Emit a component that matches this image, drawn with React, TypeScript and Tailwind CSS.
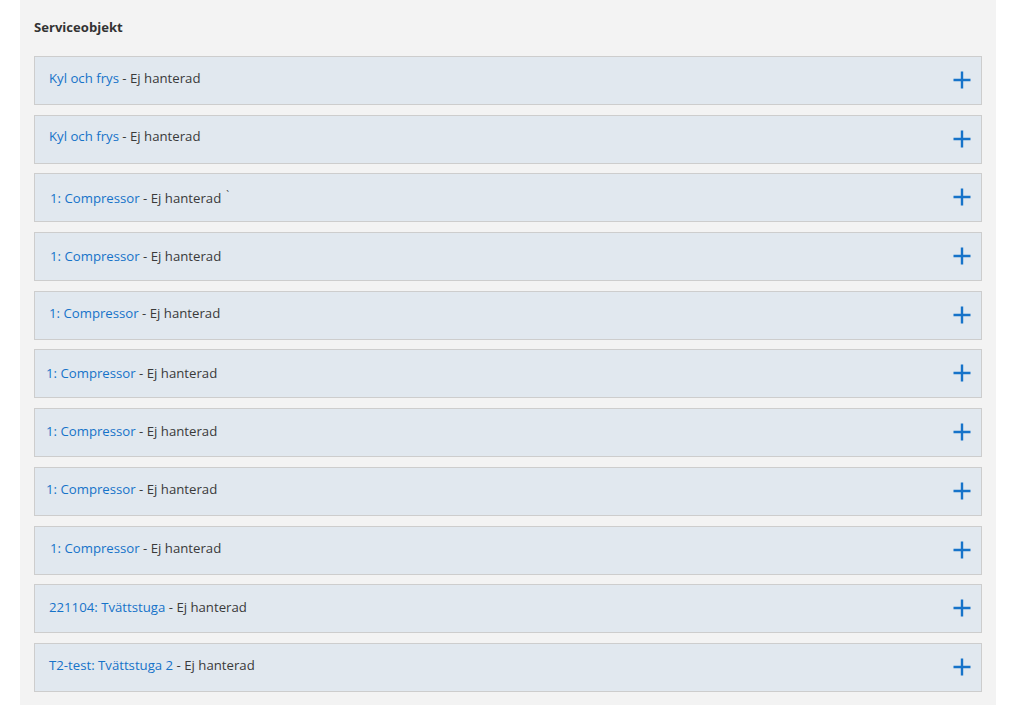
import React from 'react';

type Item = { name: string; pad: string; shift: string; extra?: string };

const items: Item[] = [
    { name: 'Kyl och frys', pad: 'pl-[14px]', shift: '-mt-[4px]' },
    { name: 'Kyl och frys', pad: 'pl-[14px]', shift: '-mt-[4px]' },
    { name: '1: Compressor', pad: 'pl-[15px]', shift: 'mt-[2px]', extra: '`' },
    { name: '1: Compressor', pad: 'pl-[15px]', shift: 'mt-[1px]' },
    { name: '1: Compressor', pad: 'pl-[14px]', shift: '-mt-[3px]' },
    { name: '1: Compressor', pad: 'pl-[11px]', shift: '-mt-[1px]' },
    { name: '1: Compressor', pad: 'pl-[11px]', shift: '-mt-[2px]' },
    { name: '1: Compressor', pad: 'pl-[11px]', shift: '-mt-[2px]' },
    { name: '1: Compressor', pad: 'pl-[15px]', shift: '-mt-[2px]' },
    { name: '221104: Tvättstuga', pad: 'pl-[14px]', shift: '-mt-[2px]' },
    { name: 'T2-test: Tvättstuga 2', pad: 'pl-[14px]', shift: '-mt-[2px]' },
];

function PlusIcon() {
    return (
        <svg width="18" height="18" viewBox="0 0 18 18" className="shrink-0 -mt-[1px]">
            <path d="M9 0.5V17.5M0.5 9H17.5" stroke="#1673c9" strokeWidth="2.4" />
        </svg>
    );
}

export default function App() {
    return (
        <div className="min-h-[705px] bg-white font-['Open_Sans',sans-serif]">
            <div className="ml-[20px] w-[976px] min-h-[705px] bg-[#f3f3f3] px-[14px] pt-[17px] pb-[12px]">
                <h2 className="text-[13.1px] leading-5 font-bold text-[#333] mb-[19px]">Serviceobjekt</h2>

                <div className="flex flex-col gap-[9.7px]">
                    {items.map((item, i) => (
                        <div
                            key={i}
                            className={`flex items-center justify-between h-[49px] border border-[#cdcdcd] bg-[#e1e8ef] pr-[10px] ${item.pad}`}
                        >
                            <div className={`text-[13.2px] text-[#3a3a3a] ${item.shift}`}>
                                <a href="#" className="text-[#1673c9]">{item.name}</a>
                                {' - Ej hanterad'}
                                {item.extra && <span className="ml-[5px] relative -top-[4px] text-[10px]">{item.extra}</span>}
                            </div>
                            <PlusIcon />
                        </div>
                    ))}
                </div>
            </div>
        </div>
    );
}
